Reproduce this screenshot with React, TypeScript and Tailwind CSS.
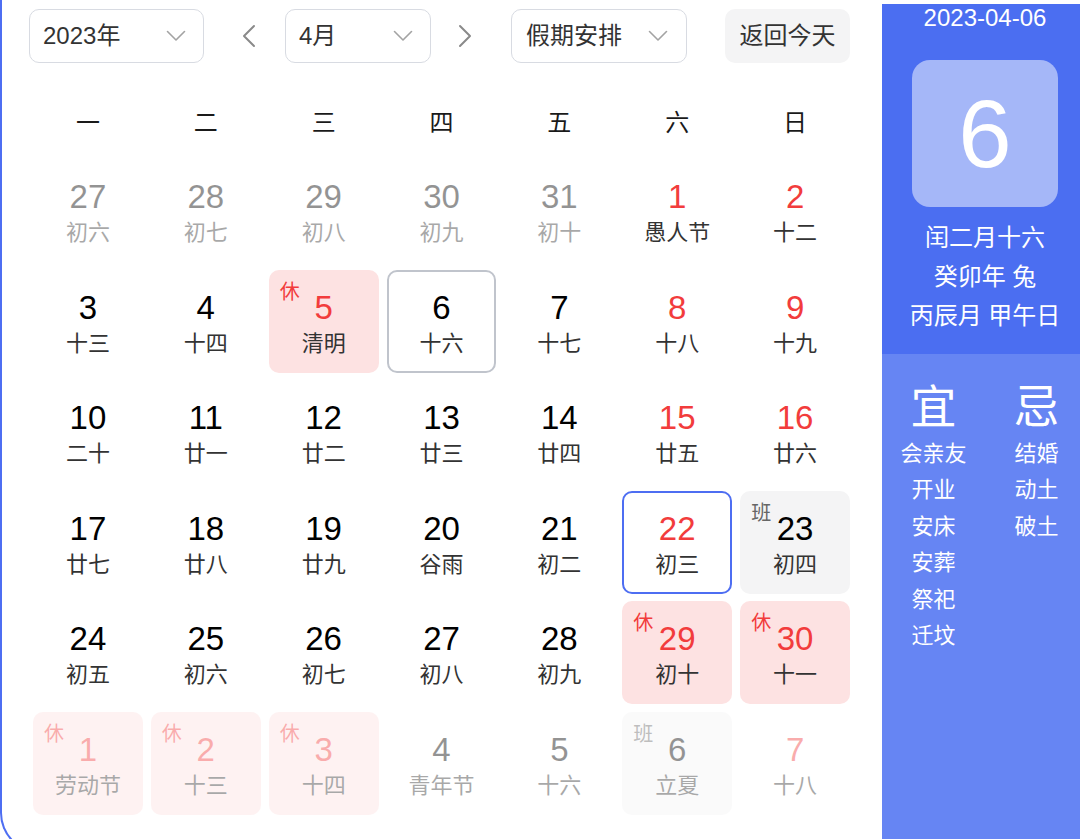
type Day = {
    d: number;
    l: string;
    out?: boolean;
    tag?: '休' | '班';
    today?: boolean;
    sel?: boolean;
};

const weeks: Day[][] = [
    [
        { d: 27, l: '初六', out: true },
        { d: 28, l: '初七', out: true },
        { d: 29, l: '初八', out: true },
        { d: 30, l: '初九', out: true },
        { d: 31, l: '初十', out: true },
        { d: 1, l: '愚人节' },
        { d: 2, l: '十二' },
    ],
    [
        { d: 3, l: '十三' },
        { d: 4, l: '十四' },
        { d: 5, l: '清明', tag: '休' },
        { d: 6, l: '十六', today: true },
        { d: 7, l: '十七' },
        { d: 8, l: '十八' },
        { d: 9, l: '十九' },
    ],
    [
        { d: 10, l: '二十' },
        { d: 11, l: '廿一' },
        { d: 12, l: '廿二' },
        { d: 13, l: '廿三' },
        { d: 14, l: '廿四' },
        { d: 15, l: '廿五' },
        { d: 16, l: '廿六' },
    ],
    [
        { d: 17, l: '廿七' },
        { d: 18, l: '廿八' },
        { d: 19, l: '廿九' },
        { d: 20, l: '谷雨' },
        { d: 21, l: '初二' },
        { d: 22, l: '初三', sel: true },
        { d: 23, l: '初四', tag: '班' },
    ],
    [
        { d: 24, l: '初五' },
        { d: 25, l: '初六' },
        { d: 26, l: '初七' },
        { d: 27, l: '初八' },
        { d: 28, l: '初九' },
        { d: 29, l: '初十', tag: '休' },
        { d: 30, l: '十一', tag: '休' },
    ],
    [
        { d: 1, l: '劳动节', out: true, tag: '休' },
        { d: 2, l: '十三', out: true, tag: '休' },
        { d: 3, l: '十四', out: true, tag: '休' },
        { d: 4, l: '青年节', out: true },
        { d: 5, l: '十六', out: true },
        { d: 6, l: '立夏', out: true, tag: '班' },
        { d: 7, l: '十八', out: true },
    ],
];

const weekdays = ['一', '二', '三', '四', '五', '六', '日'];
const good = ['会亲友', '开业', '安床', '安葬', '祭祀', '迁坟'];
const bad = ['结婚', '动土', '破土'];

// thin chevrons like the element-ui selects
const Down = () => (
    <svg width="20" height="12" viewBox="0 0 20 12" fill="none" className="text-[#a3a3a3]">
        <path d="M1.5 1.5 L10 10 L18.5 1.5" stroke="currentColor" strokeWidth="1.6" strokeLinecap="round" strokeLinejoin="round" />
    </svg>
);

const Arrow = ({ left }: { left?: boolean }) => (
    <svg width="16" height="24" viewBox="0 0 16 24" fill="none" className="text-[#8a8a8a]">
        <path
            d={left ? 'M13 2 L3 12 L13 22' : 'M3 2 L13 12 L3 22'}
            stroke="currentColor"
            strokeWidth="2"
            strokeLinecap="round"
            strokeLinejoin="round"
        />
    </svg>
);

function Cell({ day, col }: { day: Day; col: number }) {
    const red = day.tag === '休' || (col >= 5 && day.tag !== '班');

    let box = 'border-transparent';
    if (day.tag === '休') box = 'border-transparent bg-[#fde2e2]';
    if (day.tag === '班') box = 'border-transparent bg-[#f4f4f5]';
    if (day.today) box = 'border-[#c0c4cc]';
    if (day.sel) box = 'border-[#4e6ef2]';

    return (
        <div className={`relative flex h-[103px] flex-col items-center rounded-[10px] border-2 pt-[19px] ${box} ${day.out ? 'opacity-[0.42]' : ''}`}>
            {day.tag && (
                <span className={`absolute left-[9px] top-[10px] text-[20px] leading-none ${day.tag === '休' ? 'text-[#f23c3c]' : 'text-[#666]'}`}>
                    {day.tag}
                </span>
            )}
            <span className={`text-[33px] leading-[34px] ${red ? 'text-[#f23c3c]' : 'text-black'}`}>{day.d}</span>
            <span className="mt-[7px] text-[22px] leading-[24px] text-[#333]">{day.l}</span>
        </div>
    );
}

export default function App() {
    return (
        <div className="h-[839px] w-[1080px] overflow-hidden bg-white font-['Liberation_Sans','Noto_Sans_CJK_SC',sans-serif]">
            <div className="flex h-[853px] w-[1090px] rounded-bl-[40px] border-b-2 border-l-2 border-[#4e6ef2]">
                {/* Calendar */}
                <div className="w-[880px] shrink-0 pl-[27px] pt-[9px]">
                    <div className="flex items-center text-[24px] text-[#333]">
                        <div className="flex h-[54px] w-[175px] items-center justify-between rounded-[10px] border-[1.5px] border-[#d8dbe2] pl-[13px] pr-[17px]">
                            <span>2023年</span>
                            <Down />
                        </div>
                        <div className="ml-[27px] flex w-[36px] justify-center">
                            <Arrow left />
                        </div>
                        <div className="ml-[18px] flex h-[54px] w-[146px] items-center justify-between rounded-[10px] border-[1.5px] border-[#d8dbe2] pl-[13px] pr-[17px]">
                            <span>4月</span>
                            <Down />
                        </div>
                        <div className="ml-[16px] flex w-[36px] justify-center">
                            <Arrow />
                        </div>
                        <div className="ml-[28px] flex h-[54px] w-[176px] items-center justify-between rounded-[10px] border-[1.5px] border-[#d8dbe2] pl-[14px] pr-[18px]">
                            <span>假期安排</span>
                            <Down />
                        </div>
                        <button className="ml-[38px] flex h-[54px] w-[125px] items-center justify-center rounded-[10px] bg-[#f4f4f5]">
                            返回今天
                        </button>
                    </div>

                    <div className="ml-[4px] mt-[27px] grid h-[66px] w-[817px] grid-cols-7 gap-x-[8px] text-[24px] text-[#1a1a1a]">
                        {weekdays.map(w => (
                            <div key={w} className="flex items-center justify-center">{w}</div>
                        ))}
                    </div>

                    <div className="ml-[4px] mt-[3px] grid w-[817px] grid-cols-7 gap-x-[8px] gap-y-[7.5px]">
                        {weeks.map((week, r) =>
                            week.map((day, c) => <Cell key={`${r}-${c}`} day={day} col={c} />)
                        )}
                    </div>
                </div>

                {/* Day detail */}
                <div className="mt-[4px] flex w-[206px] shrink-0 flex-col text-white">
                    <div className="flex h-[352px] flex-col items-center bg-[#4b6ef1]">
                        <div className="text-[24px] leading-[28px]">2023-04-06</div>
                        <div className="mt-[28px] flex h-[147px] w-[146px] items-center justify-center rounded-[18px] bg-white/50 text-[96px] leading-none">
                            6
                        </div>
                        <div className="mt-[11px] text-center text-[24px] leading-[39px]">
                            <div>闰二月十六</div>
                            <div>癸卯年 兔</div>
                            <div>丙辰月 甲午日</div>
                        </div>
                    </div>
                    <div className="grid h-[500px] grid-cols-2 bg-[#6685f3] pt-[28px]">
                        <div className="flex flex-col items-center">
                            <div className="text-[46px] leading-[50px]">宜</div>
                            <div className="mt-[4px] flex flex-col items-center text-[22px] leading-[36.5px]">
                                {good.map(g => <div key={g}>{g}</div>)}
                            </div>
                        </div>
                        <div className="flex flex-col items-center">
                            <div className="text-[46px] leading-[50px]">忌</div>
                            <div className="mt-[4px] flex flex-col items-center text-[22px] leading-[36.5px]">
                                {bad.map(b => <div key={b}>{b}</div>)}
                            </div>
                        </div>
                    </div>
                </div>
            </div>
        </div>
    );
}
